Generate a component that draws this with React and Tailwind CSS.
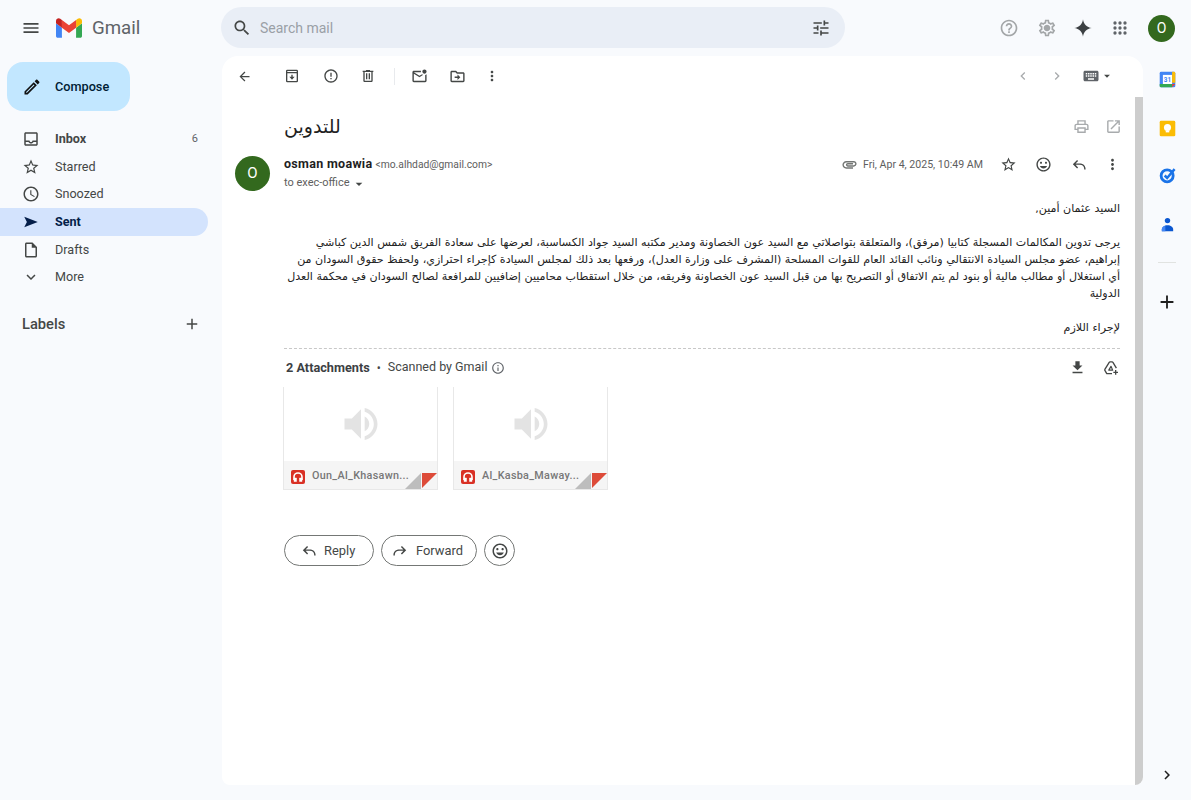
import React from "react";

const paths = {
	menu: "M3 18h18v-2H3v2zm0-5h18v-2H3v2zm0-7v2h18V6H3z",
	search: "M15.5 14h-.79l-.28-.27C15.41 12.59 16 11.11 16 9.5 16 5.91 13.09 3 9.5 3S3 5.91 3 9.5 5.91 16 9.5 16c1.61 0 3.09-.59 4.23-1.57l.27.28v.79l5 4.99L20.49 19l-4.99-5zm-6 0C7.01 14 5 11.99 5 9.5S7.01 5 9.5 5 14 7.01 14 9.5 11.99 14 9.5 14z",
	tune: "M3 17v2h6v-2H3zM3 5v2h10V5H3zm10 16v-2h8v-2h-8v-2h-2v6h2zM7 9v2H3v2h4v2h2V9H7zm14 4v-2H11v2h10zm-6-4h2V7h4V5h-4V3h-2v6z",
	help: "M11 18h2v-2h-2v2zm1-16C6.48 2 2 6.48 2 12s4.48 10 10 10 10-4.48 10-10S17.52 2 12 2zm0 18c-4.41 0-8-3.59-8-8s3.59-8 8-8 8 3.59 8 8-3.59 8-8 8zm0-14c-2.21 0-4 1.79-4 4h2c0-1.1.9-2 2-2s2 .9 2 2c0 2-3 1.75-3 5h2c0-2.25 3-2.5 3-5 0-2.21-1.79-4-4-4z",
	settings: "M19.43 12.98c.04-.32.07-.64.07-.98 0-.34-.03-.66-.07-.98l2.11-1.65c.19-.15.24-.42.12-.64l-2-3.46c-.09-.16-.26-.25-.44-.25-.06 0-.12.01-.17.03l-2.49 1c-.52-.4-1.08-.73-1.69-.98l-.38-2.65C14.46 2.18 14.25 2 14 2h-4c-.25 0-.46.18-.49.42l-.38 2.65c-.61.25-1.17.59-1.69.98l-2.49-1c-.06-.02-.12-.03-.18-.03-.17 0-.34.09-.43.25l-2 3.46c-.13.22-.07.49.12.64l2.11 1.65c-.04.32-.07.65-.07.98 0 .33.03.66.07.98l-2.11 1.65c-.19.15-.24.42-.12.64l2 3.46c.09.16.26.25.44.25.06 0 .12-.01.17-.03l2.49-1c.52.4 1.08.73 1.69.98l.38 2.65c.03.24.24.42.49.42h4c.25 0 .46-.18.49-.42l.38-2.65c.61-.25 1.17-.59 1.69-.98l2.49 1c.06.02.12.03.18.03.17 0 .34-.09.43-.25l2-3.46c.12-.22.07-.49-.12-.64l-2.11-1.65zm-1.98-1.71c.04.31.05.52.05.73 0 .21-.02.43-.05.73l-.14 1.13.89.7 1.08.84-.7 1.21-1.27-.51-1.04-.42-.9.68c-.43.32-.84.56-1.25.73l-1.06.43-.16 1.13-.2 1.35h-1.4l-.19-1.35-.16-1.13-1.06-.43c-.43-.18-.83-.41-1.23-.71l-.91-.7-1.06.43-1.27.51-.7-1.21 1.08-.84.89-.7-.14-1.13c-.03-.31-.05-.54-.05-.74s.02-.43.05-.73l.14-1.13-.89-.7-1.08-.84.7-1.21 1.27.51 1.04.42.9-.68c.43-.32.84-.56 1.25-.73l1.06-.43.16-1.13.2-1.35h1.39l.19 1.35.16 1.13 1.06.43c.43.18.83.41 1.23.71l.91.7 1.06-.43 1.27-.51.7 1.21-1.07.85-.89.7.14 1.13zM12 8c-2.21 0-4 1.79-4 4s1.79 4 4 4 4-1.79 4-4-1.79-4-4-4z",
	spark: "M12 1.5c.6 5.8 4.7 9.9 10.5 10.5-5.8.6-9.9 4.7-10.5 10.5C11.4 16.700 7.300 12.600 1.500 12 7.300 11.400 11.400 7.300 12 1.500z",
	apps: "M6 8a2 2 0 1 0 0-4 2 2 0 0 0 0 4zm6 0a2 2 0 1 0 0-4 2 2 0 0 0 0 4zm6 0a2 2 0 1 0 0-4 2 2 0 0 0 0 4zM6 14a2 2 0 1 0 0-4 2 2 0 0 0 0 4zm6 0a2 2 0 1 0 0-4 2 2 0 0 0 0 4zm6 0a2 2 0 1 0 0-4 2 2 0 0 0 0 4zM6 20a2 2 0 1 0 0-4 2 2 0 0 0 0 4zm6 0a2 2 0 1 0 0-4 2 2 0 0 0 0 4zm6 0a2 2 0 1 0 0-4 2 2 0 0 0 0 4z",
	back: "M20 11H7.83l5.59-5.59L12 4l-8 8 8 8 1.41-1.41L7.83 13H20v-2z",
	archive: "M5 2.500h14A2 2 0 0 1 21 4.500v15a2 2 0 0 1-2 2H5a2 2 0 0 1-2-2v-15a2 2 0 0 1 2-2zM5 8v11.500h14V8H5zm0-3.500V6h14V4.500H5zM11 10h2v3h3l-4 4.500L8 13h3v-3z",
	report: "M11 15h2v2h-2zm0-8h2v6h-2zm.99-5C6.47 2 2 6.48 2 12s4.47 10 9.990 10C17.520 22 22 17.520 22 12S17.520 2 11.990 2zM12 20c-4.420 0-8-3.580-8-8s3.580-8 8-8 8 3.580 8 8-3.580 8-8 8z",
	trash: "M15 4V3H9v1H4v2h1v13c0 1.100.900 2 2 2h10c1.100 0 2-.900 2-2V6h1V4h-5zm2 15H7V6h10v13zM9 8h2v9H9zm4 0h2v9h-2z",
	unread: "M22 8.980V18c0 1.100-.900 2-2 2H4c-1.100 0-2-.900-2-2V6c0-1.100.900-2 2-2h10.100c-.060.320-.100.660-.100 1s.040.680.100 1H4l8 5 3.670-2.290c.470.430 1.020.760 1.630.980L12 13 4 8v10h16V9.900c.740-.150 1.420-.480 2-.920zM16 5c0 1.660 1.340 3 3 3s3-1.340 3-3-1.340-3-3-3-3 1.340-3 3z",
	move: "M20 6h-8l-2-2H4c-1.100 0-1.990.900-1.990 2L2 18c0 1.100.900 2 2 2h16c1.100 0 2-.900 2-2V8c0-1.100-.900-2-2-2zm0 12H4V6h5.170l2 2H20v10zm-8-4H8v-2h4V9l4 4-4 4v-3z",
	more: "M12 8c1.100 0 2-.900 2-2s-.900-2-2-2-2 .900-2 2 .900 2 2 2zm0 2c-1.100 0-2 .900-2 2s.900 2 2 2 2-.900 2-2-.900-2-2-2zm0 6c-1.100 0-2 .900-2 2s.900 2 2 2 2-.900 2-2-.900-2-2-2z",
	left: "M15.410 7.410 14 6l-6 6 6 6 1.410-1.410L10.830 12z",
	right: "M10 6 8.590 7.410 13.170 12l-4.580 4.590L10 18l6-6z",
	keyboard: "M20 5H4c-1.100 0-2 .900-2 2v10c0 1.100.900 2 2 2h16c1.100 0 2-.900 2-2V7c0-1.100-.900-2-2-2zM11 8h2v2h-2V8zm0 3h2v2h-2v-2zM8 8h2v2H8V8zm0 3h2v2H8v-2zm-1 2H5v-2h2v2zm0-3H5V8h2v2zm9 7H8v-2h8v2zm0-4h-2v-2h2v2zm0-3h-2V8h2v2zm3 3h-2v-2h2v2zm0-3h-2V8h2v2z",
	caret: "M7 10l5 5 5-5z",
	print: "M19 8h-1V3H6v5H5c-1.660 0-3 1.340-3 3v6h4v4h12v-4h4v-6c0-1.660-1.340-3-3-3zM8 5h8v3H8V5zm8 12v2H8v-4h8v2zm2-2v-2H6v2H4v-4c0-.550.450-1 1-1h14c.550 0 1 .450 1 1v4h-2z",
	open: "M19 19H5V5h7V3H5c-1.110 0-2 .900-2 2v14c0 1.100.890 2 2 2h14c1.100 0 2-.900 2-2v-7h-2v7zM14 3v2h3.590l-9.830 9.830 1.410 1.410L19 6.410V10h2V3h-7z",
	attach: "M2 12.500C2 9.460 4.460 7 7.500 7H18c2.210 0 4 1.790 4 4s-1.790 4-4 4H9.500C8.120 15 7 13.880 7 12.500S8.120 10 9.500 10H17v2H9.410c-.550 0-.550 1 0 1H18c1.100 0 2-.900 2-2s-.900-2-2-2H7.500C5.570 9 4 10.570 4 12.500S5.570 16 7.500 16H17v2H7.500C4.460 18 2 15.540 2 12.500z",
	star: "M22 9.240l-7.190-.620L12 2 9.190 8.630 2 9.240l5.460 4.730L5.820 21 12 17.270 18.180 21l-1.630-7.030L22 9.240zM12 15.400l-3.760 2.270 1-4.280-3.320-2.880 4.380-.380L12 6.100l1.710 4.040 4.380.380-3.320 2.880 1 4.280L12 15.400z",
	smile: "M15.500 11c.830 0 1.500-.670 1.500-1.500S16.330 8 15.500 8 14 8.670 14 9.500s.670 1.500 1.500 1.500zm-7 0c.830 0 1.500-.670 1.500-1.500S9.330 8 8.500 8 7 8.670 7 9.500 7.670 11 8.500 11zm3.490-9C6.470 2 2 6.480 2 12s4.470 10 9.990 10C17.520 22 22 17.520 22 12S17.520 2 11.990 2zM12 20c-4.420 0-8-3.580-8-8s3.580-8 8-8 8 3.580 8 8-3.580 8-8 8zm0-2.500c2.330 0 4.310-1.460 5.110-3.500H6.890c.800 2.040 2.780 3.500 5.110 3.500z",
	reply: "M20 19v-1c0-3.300-2.700-5.500-6-5.500H7.830l3.580 3.590L10 17.500l-6-6 6-6 1.410 1.410L7.830 10.500H14c4.400 0 8 3.100 8 7.500v1h-2z",
	forward: "M4 19v-1c0-3.300 2.700-5.500 6-5.500h6.170l-3.580 3.590L14 17.500l6-6-6-6-1.410 1.410 3.580 3.590H10c-4.400 0-8 3.100-8 7.500v1h2z",
	inbox: "M19 3H4.990c-1.110 0-1.980.890-1.980 2L3 19c0 1.100.880 2 1.990 2H19c1.100 0 2-.900 2-2V5c0-1.110-.900-2-2-2zm0 16H5v-3h3.560c.690 1.190 1.970 2 3.450 2s2.750-.810 3.450-2H19v3zm0-5h-4.990c0 1.100-.900 2-2 2s-2-.900-2-2H5V5h14v9z",
	clock: "M11.990 2C6.470 2 2 6.480 2 12s4.470 10 9.990 10C17.520 22 22 17.520 22 12S17.520 2 11.990 2zM12 20c-4.420 0-8-3.580-8-8s3.580-8 8-8 8 3.580 8 8-3.580 8-8 8zm.500-13H11v6l5.250 3.150.750-1.230-4.500-2.670z",
	send: "M3 5l18 7-18 7 3.500-7L3 5z",
	draft: "M14 2H6c-1.100 0-1.990.900-1.990 2L4 20c0 1.100.890 2 1.990 2H18c1.100 0 2-.900 2-2V8l-6-6zM6 20V4h7v5h5v11H6z",
	expand: "M16.590 8.590L12 13.170 7.410 8.590 6 10l6 6 6-6z",
	add: "M19 13h-6v6h-2v-6H5v-2h6V5h2v6h6v2z",
	edit: "M3 17.250V21h3.750L17.810 9.940l-3.750-3.750L3 17.250zM5.920 19H5v-.920l9.060-9.060.920.920L5.920 19zM20.710 7.040c.390-.390.390-1.020 0-1.410l-2.340-2.340c-.390-.390-1.020-.390-1.410 0l-1.830 1.830 3.750 3.750 1.830-1.830z",
	download: "M19 9h-4V3H9v6H5l7 7 7-7zM5 18v2h14v-2H5z",
	info: "M11 7h2v2h-2zm0 4h2v6h-2zm1-9C6.480 2 2 6.480 2 12s4.480 10 10 10 10-4.480 10-10S17.520 2 12 2zm0 18c-4.410 0-8-3.590-8-8s3.590-8 8-8 8 3.590 8 8-3.590 8-8 8z",
	speaker: "M3 9v6h4l5 5V4L7 9H3zm13.500 3c0-1.770-1.020-3.290-2.500-4.030v8.050c1.480-.730 2.500-2.250 2.500-4.020zM14 3.230v2.060c2.890.860 5 3.540 5 6.710s-2.110 5.850-5 6.710v2.060c4.010-.910 7-4.490 7-8.770s-2.990-7.860-7-8.770z",
};

function Icon({ name, className = "" }) {
	return (
		<svg viewBox="0 0 24 24" fill="currentColor" className={`shrink-0 ${className}`}>
			<path fillRule="evenodd" d={paths[name]} />
		</svg>
	);
}

function DriveAdd({ className = "" }) {
	return (
		<svg viewBox="0 0 24 24" fill="none" stroke="currentColor" strokeWidth="2" strokeLinejoin="round" className={`shrink-0 ${className}`}>
			<path d="M13.500 20.500H6.500a1.500 1.500 0 0 1-1.300-.8l-2.400-4a1.500 1.500 0 0 1 0-1.500l6.500-10.700a1.500 1.500 0 0 1 1.300-.7h3a1.500 1.500 0 0 1 1.300.7l5.200 8.700" />
			<path d="M12 9.500l-3.300 5.700h5.800z" strokeWidth="1.800" />
			<path d="M19 15v7M15.500 18.500h7" />
		</svg>
	);
}

function GmailLogo() {
	return (
		<svg viewBox="52 42 88 66" className="w-[26px] h-[20px] shrink-0">
			<path fill="#4285f4" d="M58 108h14V74L52 59v43c0 3.320 2.690 6 6 6" />
			<path fill="#34a853" d="M120 108h14c3.320 0 6-2.690 6-6V59l-20 15" />
			<path fill="#fbbc04" d="M120 48v26l20-15v-8c0-7.420-8.470-11.650-14.400-7.200" />
			<path fill="#ea4335" d="M72 74V48l24 18 24-18v26L96 92" />
			<path fill="#c5221f" d="M52 51v8l20 15V48l-5.600-4.200c-5.940-4.450-14.400-.220-14.400 7.200" />
		</svg>
	);
}

const navItems = [
	{ label: "Inbox", icon: "inbox", count: "6", bold: true },
	{ label: "Starred", icon: "star" },
	{ label: "Snoozed", icon: "clock" },
	{ label: "Sent", icon: "send", active: true },
	{ label: "Drafts", icon: "draft" },
	{ label: "More", icon: "expand" },
];

function Sidebar() {
	return (
		<aside className="w-[222px] shrink-0">
			<div className="ml-[7px] mt-[6px] w-[123px] h-[49px] rounded-2xl bg-[#c2e7ff] flex items-center pl-[15px] text-[#001d35]">
				<Icon name="edit" className="w-[20px] h-[20px] text-[#111]" />
				<span className="ml-[13px] text-[12.700px] font-medium">Compose</span>
			</div>
			<nav className="mt-[14px] w-[208px]">
				{navItems.map((item) => (
					<div
						key={item.label}
						className={`h-[27.7px] flex items-center pl-[22px] pr-[10px] rounded-r-full text-[12.600px] ${
							item.active ? "bg-[#d3e3fd] text-[#041e49] font-bold" : "text-[#444746]"
						} ${item.bold ? "font-bold text-[#202124]" : ""}`}
					>
						<Icon name={item.icon} className={`w-[18px] h-[18px] ${item.active ? "text-[#041e49]" : "text-[#444746]"}`} />
						<span className="ml-[15px] pt-[1px] flex-1">{item.label}</span>
						{item.count && <span className="text-[11px] font-normal text-[#5f6368]">{item.count}</span>}
					</div>
				))}
			</nav>
			<div className="mt-[21px] h-[24px] flex items-center justify-between pl-[22px] pr-[21px] text-[#444746]">
				<span className="text-[14.700px] font-medium">Labels</span>
				<Icon name="add" className="w-[18px] h-[18px]" />
			</div>
		</aside>
	);
}

function Attachment({ name }) {
	return (
		<div className="relative w-[155px] h-[103px] border-x border-b border-[#e8e8e8] flex flex-col">
			<div className="flex-1 flex items-center justify-center bg-white">
				<Icon name="speaker" className="w-[44px] h-[44px] text-[#e3e3e3]" />
			</div>
			<div className="h-[28px] pt-[3px] bg-[#f5f5f5] flex items-center pl-[7px]">
				<span className="w-[14px] h-[14px] rounded-[2px] bg-[#d93025] flex items-center justify-center shrink-0">
					<svg viewBox="0 0 14 14" className="w-[14px] h-[14px]" fill="none" stroke="#fff" strokeWidth="1.600">
						<path d="M3 10V7a4 4 0 0 1 8 0v3" />
						<path d="M3 8h2.500v3.500H3zM8.500 8H11v3.500H8.500z" fill="#fff" strokeWidth="0.500" />
					</svg>
				</span>
				<span className="ml-[7px] text-[10.800px] font-medium text-[#777] tracking-[0.3px]">{name}</span>
			</div>
			<svg viewBox="0 0 32 16" className="absolute right-0 bottom-0 w-[32px] h-[16px]">
				<path d="M0 16 16 0v16z" fill="#bdbdbd" />
				<path d="M17 0h15L17 15z" fill="#dd4b39" />
			</svg>
		</div>
	);
}

function PillButton({ icon, label, className }) {
	return (
		<div className={`h-[31px] rounded-full border border-[#747775] flex items-center text-[#444746] ${className}`}>
			<Icon name={icon} className="w-[17px] h-[17px]" />
			<span className="ml-[7px] text-[12.900px]">{label}</span>
		</div>
	);
}

function Message() {
	return (
		<div className="flex-1 min-w-0">
			<div className="h-[56px] flex items-center pl-[62px] pr-[13px]">
				<h1 dir="rtl" className="text-[19px] text-[#1f1f1f] font-['DejaVu_Sans',sans-serif] mt-[3px]">للتدوين</h1>
				<Icon name="print" className="ml-auto mt-[2px] w-[17px] h-[17px] text-[#a8abad]" />
				<Icon name="open" className="ml-[15px] mt-[2px] w-[17px] h-[17px] text-[#a8abad]" />
			</div>

			<div className="flex pl-[13px] pr-[14px]">
				<div className="w-[35px] h-[35px] mt-[3px] rounded-full bg-[#33691e] text-white flex items-center justify-center text-[15px]">O</div>
				<div className="ml-[14px] mt-[2px] flex-1">
					<div className="flex items-center h-[17px] mt-[1px]">
						<span className="text-[12.500px] font-bold text-[#1f1f1f] tracking-[0.3px]">osman moawia</span>
						<span className="ml-[3px] text-[10.300px] text-[#5e5e5e]">{"<mo.alhdad@gmail.com>"}</span>
						<Icon name="attach" className="ml-auto w-[17px] h-[17px] text-[#747775]" />
						<span className="ml-[5px] text-[10.600px] text-[#5e5e5e]">Fri, Apr 4, 2025, 10:49 AM</span>
						<Icon name="star" className="ml-[17px] w-[17px] h-[17px] text-[#444746]" />
						<Icon name="smile" className="ml-[18px] w-[17px] h-[17px] text-[#444746]" />
						<Icon name="reply" className="ml-[18px] w-[17px] h-[17px] text-[#444746]" />
						<Icon name="more" className="ml-[17px] w-[17px] h-[17px] text-[#444746]" />
					</div>
					<div className="flex items-center h-[17px] mt-[2px] text-[11px] text-[#5e5e5e]">
						to exec-office
						<Icon name="caret" className="ml-[1px] w-[16px] h-[16px] text-[#444746]" />
					</div>
				</div>
			</div>

			<div className="ml-[62px] mr-[15px]">
				<div dir="rtl" className="mt-[8px] text-[11.100px] leading-[17px] text-[#222] font-['DejaVu_Sans',sans-serif]">
					<p>السيد عثمان أمين,</p>
					<p className="mt-[17px]">
						يرجى تدوين المكالمات المسجلة كتابيا (مرفق)، والمتعلقة بتواصلاتي مع السيد عون الخصاونة ومدير مكتبه السيد جواد الكساسبة، لعرضها على سعادة الفريق شمس الدين كباشي إبراهيم، عضو مجلس السيادة الانتقالي ونائب القائد العام للقوات المسلحة (المشرف على وزارة العدل)، ورفعها بعد ذلك لمجلس السيادة كإجراء احترازي، ولحفظ حقوق السودان من أي استغلال أو مطالب مالية أو بنود لم يتم الاتفاق أو التصريح بها من قبل السيد عون الخصاونة وفريقه، من خلال استقطاب محاميين إضافيين للمرافعة لصالح السودان في محكمة العدل الدولية
					</p>
					<p className="mt-[17px]">لإجراء اللازم</p>
				</div>

				<div className="mt-[12px] border-t border-dashed border-[#c8c8c8] h-[38px] flex items-center pl-[2px] pr-[1px]">
					<span className="text-[12.700px] font-bold text-[#3c4043]">2 Attachments</span>
					<span className="mx-[7px] text-[12px] text-[#444746]">•</span>
					<span className="text-[12.500px] text-[#444746]">Scanned by Gmail</span>
					<Icon name="info" className="ml-[4px] w-[14px] h-[14px] text-[#5f6368]" />
					<Icon name="download" className="ml-auto w-[17px] h-[17px] text-[#444746]" />
					<DriveAdd className="ml-[17px] w-[16px] h-[16px] text-[#444746]" />
				</div>

				<div className="flex gap-[15px] mt-[1px] -ml-[1px]">
					<Attachment name="Oun_Al_Khasawn..." />
					<Attachment name="Al_Kasba_Maway..." />
				</div>

				<div className="flex gap-[7px] mt-[45px]">
					<PillButton icon="reply" label="Reply" className="w-[90px] pl-[15px]" />
					<PillButton icon="forward" label="Forward" className="w-[96px] pl-[10px]" />
					<div className="w-[31px] h-[31px] rounded-full border border-[#747775] flex items-center justify-center text-[#444746]">
						<Icon name="smile" className="w-[18px] h-[18px]" />
					</div>
				</div>
			</div>
		</div>
	);
}

function RightRail() {
	return (
		<aside className="w-[48px] shrink-0 mb-[15px] flex flex-col items-center">
			<svg viewBox="0 0 24 24" className="w-[17px] h-[17px] mt-[15px] shrink-0">
				<rect x="1" y="1" width="22" height="22" rx="2" fill="#4285f4" />
				<rect x="5.500" y="5.500" width="13" height="13" fill="#fff" />
				<path d="M1 18.500h17.500V23H3a2 2 0 0 1-2-2z" fill="#34a853" />
				<path d="M18.500 1H21a2 2 0 0 1 2 2v13.500h-4.500z" fill="#fbbc04" />
				<path d="M18.500 18.500H23L18.500 23z" fill="#ea4335" />
				<text x="12" y="16" textAnchor="middle" fontSize="9" fontWeight="700" fill="#4285f4" fontFamily="Roboto, sans-serif">31</text>
			</svg>
			<svg viewBox="0 0 24 24" className="w-[17px] h-[17px] mt-[32px] shrink-0">
				<rect x="1" y="1" width="22" height="22" rx="2" fill="#fbbc04" />
				<circle cx="12" cy="10.500" r="5" fill="#fff" />
				<rect x="9.500" y="15" width="5" height="2.500" fill="#fff" />
			</svg>
			<svg viewBox="0 0 24 24" fill="none" className="w-[17px] h-[17px] mt-[30px] shrink-0">
				<circle cx="11.500" cy="12.500" r="8.500" stroke="#1a73e8" strokeWidth="4" />
				<path d="M8 12l3.500 3.500L22 3" stroke="#1a73e8" strokeWidth="3.500" />
			</svg>
			<svg viewBox="0 0 24 24" className="w-[17px] h-[17px] mt-[32px] shrink-0">
				<circle cx="12" cy="6.500" r="3.800" fill="#0b57d0" />
				<path d="M4 19c0-3.500 3.500-6 8-6s8 2.500 8 6v2.500H4z" fill="#0b57d0" />
				<path d="M4 19c0-2.500 2-4.500 5-5.400V21.500H4z" fill="#4285f4" />
			</svg>
			<div className="w-[18px] h-px bg-[#e1e3e1] mt-[29px]" />
			<Icon name="add" className="w-[22px] h-[22px] mt-[28px] text-[#1f1f1f]" />
			<Icon name="right" className="w-[18px] h-[18px] mt-auto mb-[1px] text-[#1f1f1f]" />
		</aside>
	);
}

export default function App() {
	return (
		<div className="h-[800px] overflow-hidden bg-[#f8fafd] flex flex-col font-['Roboto',sans-serif]">
			<header className="h-[56px] shrink-0 flex items-center">
				<div className="w-[221px] shrink-0 flex items-center pl-[21px]">
					<Icon name="menu" className="w-[20px] h-[20px] text-[#444746]" />
					<span className="ml-[15px]"><GmailLogo /></span>
					<span className="ml-[10px] text-[18.700px] text-[#5f6368]">Gmail</span>
				</div>
				<div className="w-[624px] h-[41px] mb-[1px] rounded-full bg-[#e9eef6] flex items-center pl-[11px] pr-[14px]">
					<Icon name="search" className="w-[20px] h-[20px] text-[#444746]" />
					<span className="ml-[8px] mt-[1px] text-[14px] text-[#9aa0a6]">Search mail</span>
					<Icon name="tune" className="ml-auto w-[20px] h-[20px] text-[#444746]" />
				</div>
				<div className="flex items-center ml-[154px]">
					<Icon name="help" className="w-[20px] h-[20px] text-[#a3a6a8]" />
					<Icon name="settings" className="ml-[18px] w-[20px] h-[20px] text-[#a3a6a8]" />
					<Icon name="spark" className="ml-[16px] w-[20px] h-[20px] text-[#3c4043]" />
					<Icon name="apps" className="ml-[17px] w-[20px] h-[20px] text-[#5f6368]" />
					<div className="ml-[18px] w-[27px] h-[27px] rounded-full bg-[#33691e] text-white flex items-center justify-center text-[14px]">O</div>
				</div>
			</header>

			<div className="flex-1 flex min-h-0">
				<Sidebar />
				<main className="w-[921px] mb-[15px] bg-white rounded-t-2xl rounded-b-lg overflow-hidden flex flex-col">
					<div className="h-[41px] pb-[1px] shrink-0 flex items-center pl-[15px] pr-[29px] text-[#444746]">
						<Icon name="back" className="w-[15px] h-[15px]" />
						<Icon name="archive" className="ml-[32px] w-[16px] h-[16px]" />
						<Icon name="report" className="ml-[23px] w-[16px] h-[16px]" />
						<Icon name="trash" className="ml-[21px] w-[16px] h-[16px]" />
						<div className="ml-[18px] w-px h-[17px] bg-[#e8eaed]" />
						<Icon name="unread" className="ml-[16px] w-[17px] h-[17px]" />
						<Icon name="move" className="ml-[21px] w-[17px] h-[17px]" />
						<Icon name="more" className="ml-[18px] w-[16px] h-[16px]" />
						<Icon name="left" className="ml-auto w-[16px] h-[16px] text-[#a8abad]" />
						<Icon name="right" className="ml-[18px] w-[16px] h-[16px] text-[#a8abad]" />
						<Icon name="keyboard" className="ml-[17px] w-[18px] h-[18px] text-[#5f6368]" />
						<Icon name="caret" className="w-[14px] h-[14px]" />
					</div>
					<div className="flex-1 flex min-h-0">
						<Message />
						<div className="w-[8px] bg-[#cdcdcd] shrink-0" />
					</div>
				</main>
				<RightRail />
			</div>
		</div>
	);
}
